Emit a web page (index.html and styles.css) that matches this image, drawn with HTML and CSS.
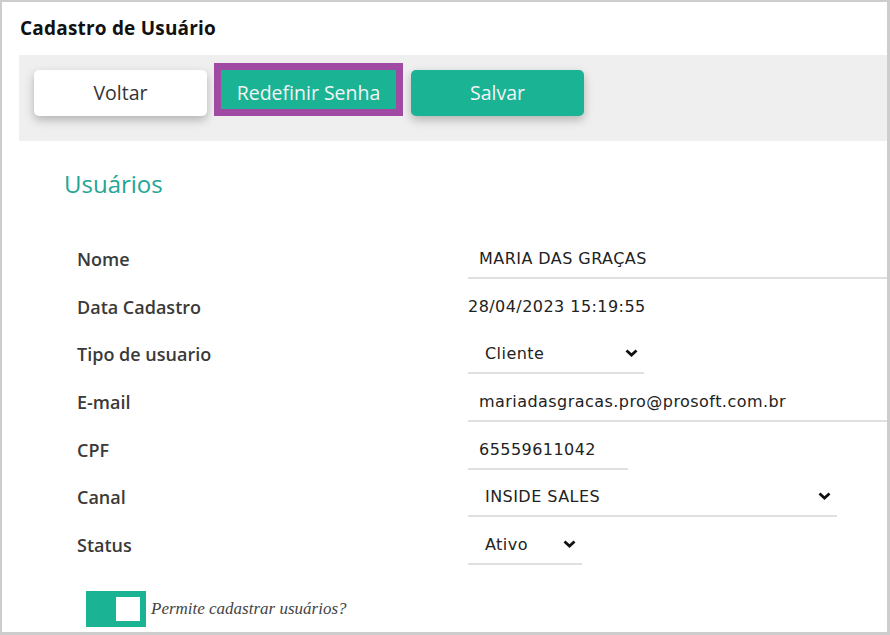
FILE: index.html
```html
<!DOCTYPE html>
<html lang="pt-BR">
<head>
    <meta charset="UTF-8">
    <title>Cadastro de Usuário</title>
    <link rel="stylesheet" href="styles.css">
</head>
<body>
    <div class="frame">
        <h1 class="page-title">Cadastro de Usuário</h1>
        <div class="toolbar">
            <button class="btn btn-white">Voltar</button>
            <button class="btn btn-primary btn-marked">Redefinir Senha</button>
            <button class="btn btn-primary btn-save">Salvar</button>
        </div>
        <div class="content">
            <h2 class="section-title">Usuários</h2>
            <div class="form">
                <div class="row">
                    <span class="row-label">Nome</span>
                    <div class="field input full">MARIA DAS GRAÇAS</div>
                </div>
                <div class="row">
                    <span class="row-label">Data Cadastro</span>
                    <div class="field static">28/04/2023 15:19:55</div>
                </div>
                <div class="row">
                    <span class="row-label">Tipo de usuario</span>
                    <div class="field select w-tipo">
                        <span>Cliente</span>
                        <svg class="chevron" width="13" height="8" viewBox="0 0 13 8"><polyline points="1.5,1.5 6.5,6 11.5,1.5" fill="none" stroke="#111" stroke-width="2.8"/></svg>
                    </div>
                </div>
                <div class="row">
                    <span class="row-label">E-mail</span>
                    <div class="field input full">mariadasgracas.pro@prosoft.com.br</div>
                </div>
                <div class="row">
                    <span class="row-label">CPF</span>
                    <div class="field input w-cpf">65559611042</div>
                </div>
                <div class="row">
                    <span class="row-label">Canal</span>
                    <div class="field select w-canal">
                        <span>INSIDE SALES</span>
                        <svg class="chevron" width="13" height="8" viewBox="0 0 13 8"><polyline points="1.5,1.5 6.5,6 11.5,1.5" fill="none" stroke="#111" stroke-width="2.8"/></svg>
                    </div>
                </div>
                <div class="row">
                    <span class="row-label">Status</span>
                    <div class="field select w-status">
                        <span>Ativo</span>
                        <svg class="chevron" width="13" height="8" viewBox="0 0 13 8"><polyline points="1.5,1.5 6.5,6 11.5,1.5" fill="none" stroke="#111" stroke-width="2.8"/></svg>
                    </div>
                </div>
                <div class="switch-row">
                    <div class="switch"><div class="knob"></div></div>
                    <span class="switch-label">Permite cadastrar usuários?</span>
                </div>
            </div>
        </div>
    </div>
</body>
</html>
```

FILE: styles.css
```css
body {
    margin: 0;
    background: #fff;
    color: #333;
    font-family: "Open Sans", sans-serif;
}
.frame {
    width: 890px;
    height: 635px;
    box-sizing: border-box;
    border: 2px solid #cdcdcd;
    border-right-width: 3px;
    border-bottom-width: 3px;
    padding-top: 14px;
    overflow: hidden;
}
.page-title {
    margin: 0 0 15px 18px;
    font-size: 19px;
    line-height: 24px;
    font-weight: 700;
    letter-spacing: 0.2px;
    color: #111;
}
.toolbar {
    margin-left: 17px;
    height: 86px;
    box-sizing: border-box;
    padding: 15px 15px 25px;
    background: #efefef;
    display: flex;
    gap: 7px;
}
.btn {
    height: 46px;
    padding: 0 0 2px;
    border: 0;
    border-radius: 5px;
    font-family: "Open Sans", sans-serif;
    font-size: 19.5px;
    box-shadow: 0 4px 10px rgba(0, 0, 0, 0.25);
}
.btn-white {
    width: 173px;
    background: #fff;
    color: #333;
}
.btn-primary {
    background: #1ab394;
    color: #f4f4f4;
}
.btn-save {
    width: 173px;
    margin-left: 1px;
}
.btn-marked {
    width: 189px;
    border-radius: 0;
    box-shadow: none;
    position: relative;
}
/* highlight box drawn over the button */
.btn-marked::after {
    content: "";
    position: absolute;
    left: 0;
    right: 0;
    top: -7px;
    bottom: 0;
    border: 7px solid #a04aa3;
}
.content {
    padding-left: 62px;
}
.section-title {
    margin: 27px 0 41px;
    font-size: 24px;
    line-height: 32px;
    font-weight: 400;
    color: #23a596;
}
.form {
    margin-left: 13px;
    display: flex;
    flex-direction: column;
    gap: 9.67px;
}
.row {
    display: flex;
    height: 38px;
}
.row-label {
    width: 391px;
    flex-shrink: 0;
    font-size: 18px;
    font-weight: 600;
    line-height: 36px;
    color: #3a3a3a;
}
.field {
    height: 38px;
    box-sizing: border-box;
    border-bottom: 2px solid #e0e0e0;
    font-family: "DejaVu Sans", sans-serif;
    font-size: 16px;
    letter-spacing: 0.45px;
    line-height: 36px;
    color: #222;
    white-space: nowrap;
}
.input {
    padding-left: 11px;
}
.full {
    flex: 1;
}
.static {
    border-bottom: 0;
}
.select {
    display: flex;
    align-items: center;
    justify-content: space-between;
    padding: 0 6px 0 17px;
}
.chevron {
    margin-top: -2px;
}
.w-tipo {
    width: 176px;
}
.w-cpf {
    width: 160px;
}
.w-canal {
    width: 369px;
}
.w-status {
    width: 114px;
}
.switch-row {
    margin: 16px 0 0 9px;
    display: flex;
    align-items: center;
}
.switch {
    width: 60px;
    height: 36px;
    box-sizing: border-box;
    padding: 6px;
    background: #1ab394;
    display: flex;
    justify-content: flex-end;
}
.knob {
    width: 24px;
    height: 24px;
    background: #fff;
}
.switch-label {
    margin-left: 5px;
    font-family: "Liberation Serif", serif;
    font-style: italic;
    font-size: 17px;
    color: #444;
}
```
